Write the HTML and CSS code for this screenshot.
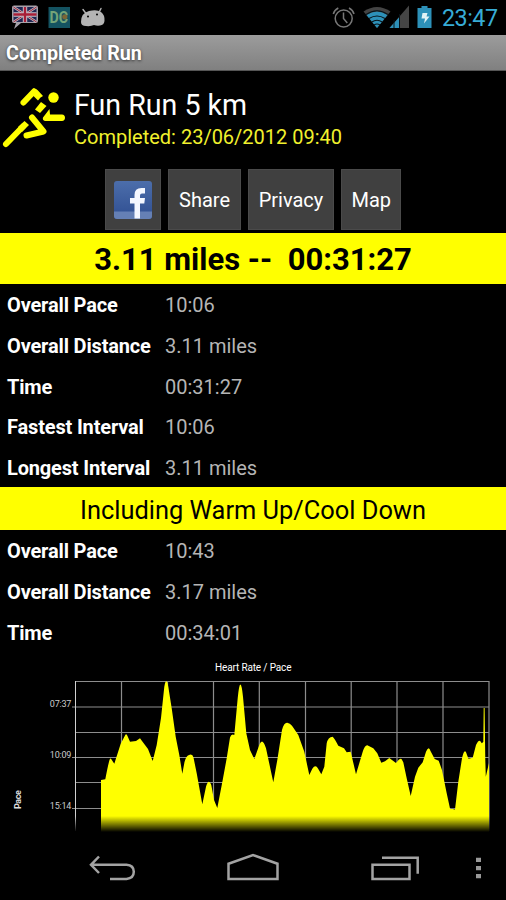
FILE: index.html
```html
<!DOCTYPE html>
<html lang="en">
<head>
<meta charset="utf-8">
<title>Completed Run</title>
<link rel="stylesheet" href="styles.css">
</head>
<body>
<div class="screen">
  <header class="status">
    <svg class="notices" width="110" height="35" viewBox="0 0 110 35">
      <path d="M14 5.500h22q2 0 2 2v13.500q0 2-2 2H21l-7 6 2-6h-2q-2 0-2-2V7.500q0-2 2-2z" fill="#a5a1a9"/>
      <path d="M13.500 7h23v15h-23z" fill="#202653"/>
      <path d="M13.500 7l23 15M36.500 7l-23 15" stroke="#bdb5bd" stroke-width="2.600"/>
      <path d="M13.500 7l23 15M36.500 7l-23 15" stroke="#a02439" stroke-width="1"/>
      <path d="M25 7v15M13.500 14.500h23" stroke="#c5c0c8" stroke-width="4.400"/>
      <path d="M25 7v15M13.500 14.500h23" stroke="#a81e37" stroke-width="2.400"/>
      <rect x="48.500" y="7" width="21.500" height="21" fill="#145361"/>
      <text class="dc" x="49.500" y="22.500" textLength="18.500" lengthAdjust="spacingAndGlyphs">DC</text>
      <circle cx="64.800" cy="16.800" r="2.600" fill="#7c6535"/>
      <path d="M83 9.500l3 4M101 8.500l-2 4" stroke="#b4b4b4" stroke-width="1.400" stroke-linecap="round"/>
      <path d="M81 22q0-9 8-11 8-2 12 1 4 3 3.500 9-.5 4-4.500 4.500-3 .5-6-.5-3 1.500-8 1-5 0-5-4z" fill="#b4b4b4"/>
      <circle cx="88" cy="16.500" r="1" fill="#000"/><circle cx="97" cy="14.500" r="1" fill="#000"/>
    </svg>
    <svg class="system" width="103" height="35" viewBox="330 0 103 35">
      <g fill="none" stroke="#777" stroke-width="1.500"><circle cx="343.700" cy="18.500" r="8.500"/><path d="M343.500 12.500v6l3.800 4.500M333.300 14q1-4 5-6M354 14q-1-4-5-6"/></g>
      <path d="M363.500 11.500Q377 2.500 390.500 11.500L377 28z" fill="#444"/>
      <path d="M366.500 15Q377 8 387.500 15L377 28z" fill="#2d91b9"/>
      <path d="M366 14.500Q377 7 388 14.500M369 18.500Q377 13.500 385 18.500M371.800 22Q377 18.500 382.200 22M374 25Q377 23 380 25" fill="none" stroke="#07141a" stroke-width="1.100"/>
      <path d="M409 5.500V28h-19.500z" fill="#454545"/><path d="M399.500 17v11h-10z" fill="#2d91b9"/>
      <path d="M394 20v8M399.500 14v14" stroke="#07141a" stroke-width="1"/>
      <path d="M421.500 6h6v2h4v20h-14V8h4z" fill="#2d91b9"/>
      <path d="M422.500 13h5l-1 3.500h3l-5.500 7 1-5h-3.500z" fill="#e2f2f5"/>
    </svg>
    <span class="clock">23:47</span>
  </header>
  <div class="titlebar"><span>Completed Run</span></div>
  <section class="run">
    <svg width="70" height="80" viewBox="0 75 70 80">
      <g fill="none" stroke="#ff0" stroke-width="6" stroke-linecap="round" stroke-linejoin="round">
        <path d="M23.500 102.500L34 91.500"/>
        <path d="M32 117.500L43.500 131.500 26.500 135.500"/>
        <path d="M6 144L23 126.500"/>
      </g>
      <path d="M33 88.500Q35.500 88 37.500 90L43 96q-3 1-5 4.500l-5-5z" fill="#ff0"/>
      <path d="M35 109.500L41 102l5.500 4-6.500 7z" fill="#ff0"/>
      <path d="M49.500 109L50 114.500h12q3 .3 3 3.200t-3 3.200H45q-2.800-.5-2-3.400z" fill="#ff0"/>
      <path d="M24.500 121l4.500 4-7 7-4-5z" fill="#ff0"/>
      <circle cx="53.500" cy="97.500" r="5.200" fill="#ff0"/>
    </svg>
    <div class="run-text">
      <h1>Fun Run 5 km</h1>
      <p>Completed: 23/06/2012 09:40</p>
    </div>
  </section>
  <nav class="actions">
    <button class="fb" aria-label="Facebook">
      <svg width="40" height="40" viewBox="0 0 40 40">
        <defs><linearGradient id="blue" x2="0" y2="1"><stop stop-color="#4c6eab"/><stop offset="1" stop-color="#2f4e91"/></linearGradient></defs>
        <rect x="1" y="1" width="38" height="38" rx="3" fill="url(#blue)"/>
        <path d="M1 31.500h38V36q0 3-3 3H4q-3 0-3-3z" fill="#6580b5"/>
        <path d="M21.500 38.500V23.500H17v-5.500h4.500v-3q0-7 7-7H32v5.500h-3q-2 0-2 2v2.500h5l-.7 5.500H27v15z" fill="#f4f7ff"/>
      </svg>
    </button>
    <button class="share"><span>Share</span></button>
    <button class="privacy"><span>Privacy</span></button>
    <button class="map"><span>Map</span></button>
  </nav>
  <div class="summary"><span>3.11 miles --&nbsp; 00:31:27</span></div>
  <dl class="stats first">
    <dt>Overall Pace</dt><dd>10:06</dd>
    <dt>Overall Distance</dt><dd>3.11 miles</dd>
    <dt>Time</dt><dd>00:31:27</dd>
    <dt>Fastest Interval</dt><dd>10:06</dd>
    <dt>Longest Interval</dt><dd>3.11 miles</dd>
  </dl>
  <div class="including"><span>Including Warm Up/Cool Down</span></div>
  <dl class="stats second">
    <dt>Overall Pace</dt><dd>10:43</dd>
    <dt>Overall Distance</dt><dd>3.17 miles</dd>
    <dt>Time</dt><dd>00:34:01</dd>
  </dl>
  <svg class="chart" width="506" height="184" viewBox="0 653 506 184">
    <defs><linearGradient id="fade" gradientUnits="userSpaceOnUse" x1="0" y1="816" x2="0" y2="832"><stop stop-color="#000" stop-opacity="0"/><stop offset="1" stop-color="#000"/></linearGradient></defs>
    <text class="chart-title" x="215" y="671.300" textLength="76.500">Heart Rate / Pace</text>
    <g class="ticks"><text x="49.800" y="707.300" textLength="21.500">07:37</text><text x="49.800" y="757.900" textLength="21.500">10:09</text><text x="49.800" y="809.300" textLength="21.500">15:14</text></g>
    <text class="axis" transform="translate(20.500 809) rotate(-90)" textLength="19">Pace</text>
    <path d="M75 681.500H489M72 707H489M75 732.500H489M72 757.500H489M75 782.500H489M72 808.500H489M121.500 681V831M167.500 681V831M213.500 681V831M259.300 681V831M305.500 681V831M351.200 681V831M397 681V831M443 681V831M489 681V831" stroke="#8d8d8d" stroke-width="1.200" fill="none"/>
    <path d="M75.500 681V831" stroke="#d0d0d0"/>
    <path fill="#ff0" d="M101 832V780L105.300 779.300Q108 765 109.500 760 110.500 757.500 111.500 759.500L114.300 763.700 120.700 743.700 125 735.500Q126.300 733 127.500 736L130 741.700 136 741 140 738.300 142 741 148 749 152.700 761 156.700 745 161 718 164.300 686.700Q166.300 676 168.300 686.700L171.700 708.300 175.700 736.700 179.300 755 182.300 773.700 184.500 762Q186 756 189 755 192.500 753.500 193.500 757.500L196.700 773.300 202.300 804.300 206 786.700Q208.700 777.500 211.300 785L214 800 217.300 808 222.700 780 226.700 758.300 230 737.500Q231.500 733 234.300 735L237.700 698.300Q240.300 671.500 243 696.700L246.300 733.300 250 750 254.300 759 259.300 745Q262.300 736.500 266 748.300L273.300 782.300 277.300 760 282 730Q284 722.300 287.300 722.700 290 723 292 725.700L298.300 735 304.300 751.700 309.300 775 312.300 768.700Q315.500 764 318 768.500L321.300 774.300 324.300 766.700 326.700 743.300Q328 737 332.700 736.700 334.500 738.300 338.300 745.700L344 748.300 346.700 752.300 350.700 751.700 356 774.300 362.700 751.700Q365 745 367.300 745.300L373.300 748.300 377.300 753.300 381.300 762.700 385 761.300 389.300 758 396 763Q400 757.500 401.500 759L403.300 762.300 406.700 778.300 410.700 796 415 776.700 418.300 767.700 422.700 762.300 426 751.700Q428.700 745 430.500 751L434.700 759 438.700 760.700 442 770 446.700 793.300 450 808.500 455 809.500 458.300 781.700 462 758.300Q464.700 746 467 755L468.500 758.700 472.700 757.700 476 745Q479.500 737.500 481.700 743.300L483.300 742 483.700 708H484.600L485.300 760 485.800 776.700 489 763V832z"/>
    <path d="M450.500 808.500h4" stroke="#777"/>
    <rect x="70" y="816" width="422" height="16.500" fill="url(#fade)"/>
  </svg>
  <footer class="navbar">
    <svg width="506" height="63" viewBox="0 837 506 63">
      <g fill="none" stroke="#a3a3a3" stroke-width="2.500">
        <path d="M99 856.500l-8 8.300 8 8.200M92 864.800h34.500q7.300.5 7.300 7t-7.300 7.200H110"/>
        <path d="M228.500 863.700L253 855l24.500 8.700V879h-49z"/>
        <path d="M372.500 864.700h37V879h-37zM382 857.700h35.700v16"/>
      </g>
      <path d="M476 857.700h5v4.300h-5zM476 866h5v4.300h-5zM476 874h5v4.300h-5z" fill="#999"/>
    </svg>
  </footer>
</div>
</body>
</html>
```

FILE: styles.css
```css
* { box-sizing: border-box; }
body { margin: 0; background: #000; color: #fff; font-family: Roboto, "Liberation Sans", sans-serif; }
svg { display: block; flex: none; }
h1, p, dl, dd { margin: 0; font-weight: 400; }
.screen { width: 506px; height: 900px; overflow: hidden; display: flex; flex-direction: column; }
.status { height: 35px; display: flex; align-items: center; flex: none; }
.system { margin-left: 220px; }
.clock { margin-left: 9px; font-size: 23.3px; line-height: 35px; color: #37acd6; letter-spacing: -.5px; padding-top: 2px; }
.dc { font-size: 16px; font-weight: 700; fill: #75a478; }
.titlebar { height: 36px; flex: none; display: flex; align-items: center; padding: 1px 0 0 6px; background: linear-gradient(#9c9c9c, #808080); border-bottom: 1px solid #555; font-size: 19.7px; font-weight: 700; text-shadow: 0 1px 3px #333; white-space: nowrap; }
.run { height: 98px; flex: none; display: flex; padding-top: 4px; gap: 4px; white-space: nowrap; }
.run-text { padding-top: 13px; }
.run h1 { font-size: 28.6px; line-height: 34px; }
.run p { color: #f1f12d; font-size: 20px; line-height: 30px; }
.actions { height: 64px; flex: none; display: flex; justify-content: center; gap: 7px; }
.actions button { height: 61px; padding: 0; border: 1px solid #4a4a4a; background: #404040; color: #fff; font: 20px Roboto, "Liberation Sans", sans-serif; display: flex; align-items: center; justify-content: center; }
.actions .fb { width: 56.5px; }
.actions .share { width: 72.5px; }
.actions .privacy { width: 86.5px; }
.actions .map { width: 60px; }
.summary, .including { flex: none; display: flex; align-items: center; justify-content: center; background: #ff0; color: #000; white-space: nowrap; }
.summary { height: 51px; font-size: 31px; font-weight: 700; padding-top: 2px; }
.including { height: 43px; font-size: 25.4px; padding-top: 2px; }
.stats { flex: none; display: grid; grid-template-columns: 158px 1fr; grid-auto-rows: 40.8px; padding-left: 7px; align-items: center; font-size: 20px; white-space: nowrap; }
.stats dt { font-weight: 700; letter-spacing: -.16px; }
.stats dd { color: #b5b5b5; }
.first { height: 203px; padding-top: .6px; }
.second { height: 123px; padding-top: 1px; }
.chart text { font-size: 10px; fill: #fff; }
.chart .ticks text { font-size: 9px; fill: #ccc; }
.chart .axis { font-size: 9px; font-weight: 700; fill: #ddd; }
.navbar { height: 63px; flex: none; }
```
